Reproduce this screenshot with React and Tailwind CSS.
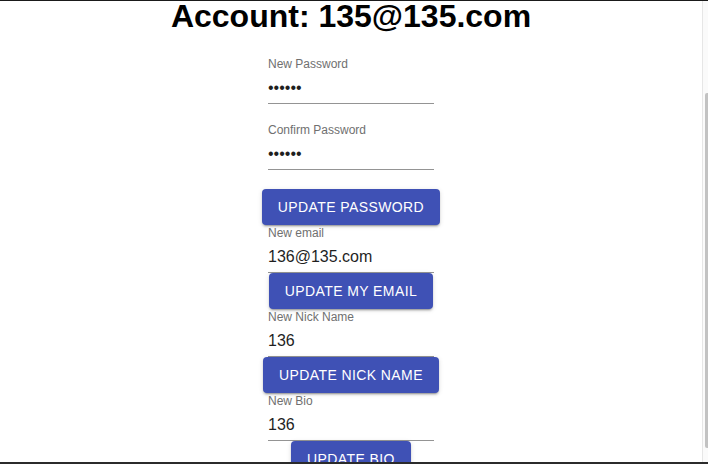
import React from 'react';

function Field({ label, value, type = 'text', className = '' }) {
  return (
    <div className={'flex w-[166px] flex-col ' + className}>
      <label className="h-[16px] text-[12px] leading-[16px] text-[#707070]">{label}</label>
      <input
        type={type}
        value={value}
        readOnly
        className="block h-[32px] w-full border-b border-[#949494] pt-[4px] pb-[4px] text-[16px] leading-[23px] text-[#1f1f1f] outline-none"
      />
    </div>
  );
}

function Button({ children, className = '' }) {
  return (
    <button
      type="button"
      className={
        'h-[36px] shrink-0 rounded-[4px] bg-[#3f51b5] px-4 text-[14px] font-medium uppercase leading-[36px] tracking-[0.4px] text-white shadow-[0px_3px_1px_-2px_rgba(0,0,0,0.2),0px_2px_2px_0px_rgba(0,0,0,0.14),0px_1px_5px_0px_rgba(0,0,0,0.12)] ' +
        className
      }
    >
      {children}
    </button>
  );
}

export default function App() {
  return (
    <div className="flex h-[464px] w-[708px] flex-col overflow-hidden bg-white font-['Liberation_Sans',Arial,sans-serif]">
      <div className="h-px shrink-0 bg-[#1a1a1a]" />
      <div className="flex min-h-0 flex-1">
        <main className="flex w-[702px] flex-col items-center overflow-hidden">
          <h1 className="text-[32px] font-bold leading-[30px] text-black">Account: 135@135.com</h1>
          <Field label="New Password" type="password" value="123456" className="mt-[25px]" />
          <Field label="Confirm Password" type="password" value="123456" className="mt-[18px]" />
          <Button className="mt-[19px]">Update Password</Button>
          <Field label="New email" value="136@135.com" />
          <Button>Update my email</Button>
          <Field label="New Nick Name" value="136" />
          <Button>Update nick name</Button>
          <Field label="New Bio" value="136" />
          <Button>Update Bio</Button>
        </main>
        <div className="flex w-[6px] border-l border-[#e6e6e6] bg-[#fafafa] pl-[2px] pt-[92px] pb-[14px]">
          <div className="w-[3px] flex-1 rounded-l-[2px] bg-[#c2c2c2]" />
        </div>
      </div>
      <div className="h-[2px] shrink-0 bg-[#2b2b2b]" />
    </div>
  );
}
